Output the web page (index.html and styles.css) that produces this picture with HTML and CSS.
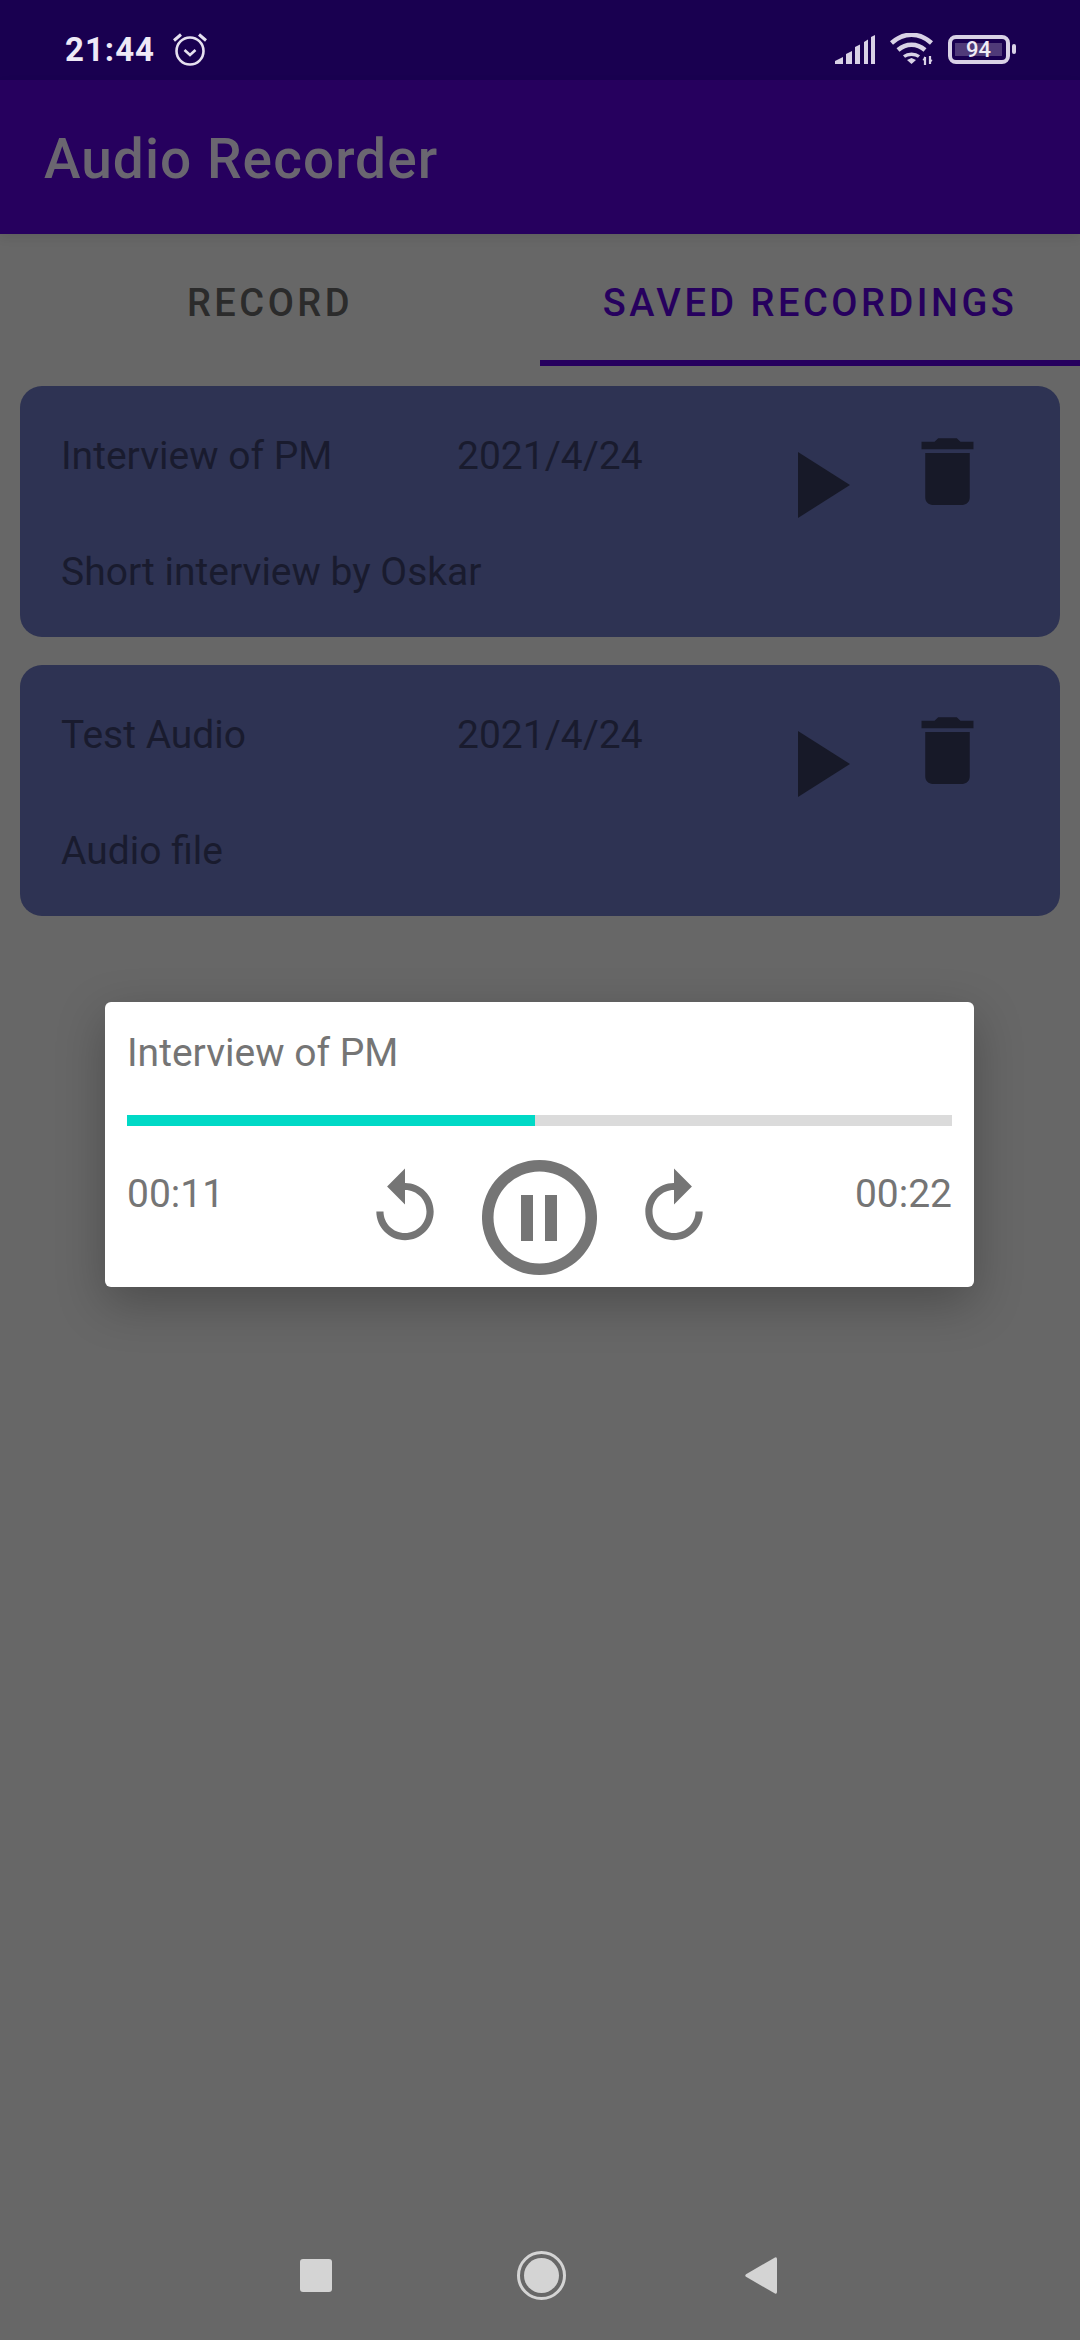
FILE: index.html
```html
<!DOCTYPE html>
<html lang="en">
<head>
<meta charset="UTF-8">
<title>Audio Recorder</title>
<link rel="stylesheet" href="styles.css">
</head>
<body>
<div class="status-bar">
	<span class="clock">21:44</span>
	<svg class="alarm" width="34" height="34" viewBox="0 0 34 34" fill="none" stroke="#e6e0f0">
		<circle cx="17" cy="19" r="13.500" stroke-width="2.600"/>
		<path d="M11.500 18l5.500 5 5.500-5" stroke-width="2.600"/>
		<path d="M1 8.500l7-6M33 8.500l-7-6" stroke-width="3"/>
	</svg>
	<div class="status-right">
		<svg class="signal" width="40" height="29" viewBox="0 0 40 29" fill="#d9d2e6">
			<path d="M0 29v-3l8-4v7zM11 29V19l6-3v13zM20 29V12l5-2.500V29zM29 29V7l4-2.500V29zM36 29V2l4-2v29z"/>
		</svg>
		<svg class="wifi" width="43" height="32" viewBox="0 0 43 32" fill="none" stroke="#d9d2e6" stroke-width="4.500">
			<path d="M1.500 10c12-11 28-11 40 0"/>
			<path d="M8 17c8-7 19-7 27 0"/>
			<path d="M14 23.500c4-3 11-3 15 0" stroke-width="3.400"/>
			<path d="M17 27l4.500-2 4.500 2-4.500 4z" fill="#d9d2e6" stroke="none"/>
			<path d="M35 24v8M40 23v8" stroke-width="2.200"/>
			<path d="M32.500 27l2.500-4v5zM42.500 27l-2.500 4v-5z" fill="#d9d2e6" stroke="none"/>
		</svg>
		<div class="battery">
			<div class="battery-body"><span class="battery-level">94</span></div>
			<div class="battery-nub"></div>
		</div>
	</div>
</div>

<div class="app-bar">Audio Recorder</div>

<div class="tabs">
	<div class="tab">RECORD</div>
	<div class="tab active">SAVED RECORDINGS</div>
</div>

<div class="content">
	<div class="card">
		<div class="card-text">
			<div class="card-top">
				<span class="card-name">Interview of PM</span>
				<span>2021/4/24</span>
			</div>
			<div class="card-desc">Short interview by Oskar</div>
		</div>
		<svg class="play" width="52" height="66" viewBox="0 0 52 66"><polygon points="0,0 52,33 0,66"/></svg>
		<svg class="trash" width="89" height="89" viewBox="0 0 24 24"><path d="M6 19c0 1.100.9 2 2 2h8c1.100 0 2-.9 2-2V7H6v12zM19 4h-3.500l-1-1h-5l-1 1H5v2h14V4z"/></svg>
	</div>
	<div class="card">
		<div class="card-text">
			<div class="card-top">
				<span class="card-name">Test Audio</span>
				<span>2021/4/24</span>
			</div>
			<div class="card-desc">Audio file</div>
		</div>
		<svg class="play" width="52" height="66" viewBox="0 0 52 66"><polygon points="0,0 52,33 0,66"/></svg>
		<svg class="trash" width="89" height="89" viewBox="0 0 24 24"><path d="M6 19c0 1.100.9 2 2 2h8c1.100 0 2-.9 2-2V7H6v12zM19 4h-3.500l-1-1h-5l-1 1H5v2h14V4z"/></svg>
	</div>
</div>

<div class="nav-bar">
	<div class="nav-square"></div>
	<div class="nav-home"><div class="nav-home-dot"></div></div>
	<svg class="nav-back" width="32" height="37" viewBox="0 0 32 37"><path d="M30 .5L1 17.200q-1.500 1.300 0 2.600L30 36.500q2 .7 2-1.500V2q0-2.200-2-1.500z"/></svg>
</div>

<div class="player">
	<div class="player-title">Interview of PM</div>
	<div class="progress"><div class="progress-fill" style="width: 49.400%"></div></div>
	<div class="player-row">
		<span class="time">00:11</span>
		<div class="controls">
			<svg width="86" height="86" viewBox="0 0 24 24"><path d="M12 5V1L7 6l5 5V7c3.310 0 6 2.690 6 6s-2.690 6-6 6-6-2.690-6-6H4c0 4.420 3.580 8 8 8s8-3.580 8-8-3.580-8-8-8z"/></svg>
			<svg width="115" height="115" viewBox="0 0 115 115"><path fill-rule="evenodd" d="M57.500 0a57.500 57.500 0 1 0 0 115a57.500 57.500 0 1 0 0-115zM57.500 11.500a46 46 0 1 1 0 92a46 46 0 1 1 0-92z"/><path d="M39 35h12v46H39zM63 35h12v46H63z"/></svg>
			<svg width="86" height="86" viewBox="0 0 24 24"><path d="M12 5V1l5 5-5 5V7c-3.310 0-6 2.690-6 6s2.690 6 6 6 6-2.690 6-6h2c0 4.420-3.580 8-8 8s-8-3.580-8-8 3.580-8 8-8z"/></svg>
		</div>
		<span class="time time-end">00:22</span>
	</div>
</div>
</body>
</html>
```

FILE: styles.css
```css
*{
	box-sizing: border-box;
}
html,body{
	margin: 0;
	padding: 0;
}
body{
	width: 1080px;
	height: 2340px;
	position: relative;
	overflow: hidden;
	display: flex;
	flex-direction: column;
	background: #676767;
	font-family: Roboto, "Liberation Sans", sans-serif;
}

.status-bar{
	height: 80px;
	flex: none;
	display: flex;
	align-items: center;
	padding: 18px 64px 0 65px;
	background: #190050;
	color: #eee9f6;
}
.clock{
	font-size: 33px;
	font-weight: 700;
	letter-spacing: 1px;
}
.alarm{
	margin-left: 18px;
}
.status-right{
	margin-left: auto;
	display: flex;
	align-items: center;
	gap: 15px;
}
.battery{
	display: flex;
	align-items: center;
	gap: 2px;
}
.battery-body{
	width: 62px;
	height: 29px;
	padding: 4px 4px 4px 3px;
	border: 4px solid #d9d2e6;
	border-radius: 8px;
	display: flex;
}
.battery-level{
	flex: 1;
	background: #4f3a78;
	color: #f0ecf6;
	font-size: 22px;
	font-weight: 500;
	line-height: 13px;
	text-align: center;
}
.battery-nub{
	width: 4px;
	height: 10px;
	background: #d9d2e6;
	border-radius: 2px;
}

.app-bar{
	height: 154px;
	flex: none;
	display: flex;
	align-items: center;
	padding: 4px 0 0 44px;
	background: #26005e;
	color: #6a6670;
	font-size: 55px;
	font-weight: 500;
	letter-spacing: 1.050px;
	position: relative;
	box-shadow: 0 4px 10px rgba(0,0,0,.08);
}

.tabs{
	height: 132px;
	flex: none;
	display: flex;
}
.tab{
	flex: 1;
	display: flex;
	align-items: center;
	justify-content: center;
	padding-top: 6px;
	color: #2b2b2b;
	font-size: 38px;
	font-weight: 500;
	letter-spacing: 3.500px;
}
.tab.active{
	padding-top: 12px;
	color: #26005e;
	border-bottom: 6px solid #26005e;
}

.content{
	flex: 1;
	display: flex;
	flex-direction: column;
	gap: 28px;
	padding: 20px 20px 0;
}
.card{
	height: 251px;
	display: flex;
	align-items: flex-start;
	padding-left: 41px;
	background: #2e3353;
	border-radius: 22px;
}
.card svg{
	flex: none;
	fill: #171928;
}
.card-text{
	width: 737px;
	padding-top: 45px;
	color: #191b2e;
	font-size: 39px;
	line-height: 50px;
}
.card-top{
	display: flex;
}
.card-name{
	width: 396px;
}
.card-desc{
	margin-top: 66px;
}
.play{
	margin-top: 66px;
}
.trash{
	margin: 41px 0 0 53px;
}

.nav-bar{
	height: 140px;
	flex: none;
	display: flex;
	align-items: flex-start;
	padding: 51px 0 0 300px;
}
.nav-square{
	width: 32px;
	height: 33px;
	margin-top: 8px;
	background: #d4d4d4;
	border-radius: 3px;
}
.nav-home{
	width: 49px;
	height: 49px;
	margin-left: 185px;
	padding: 4px;
	border: 3px solid #d4d4d4;
	border-radius: 50%;
}
.nav-home-dot{
	width: 100%;
	height: 100%;
	background: #d4d4d4;
	border-radius: 50%;
}
.nav-back{
	margin: 6px 0 0 179px;
	fill: #d4d4d4;
}

.player{
	position: absolute;
	left: 105px;
	top: 1002px;
	width: 869px;
	height: 285px;
	padding: 0 22px;
	background: #fff;
	border-radius: 6px;
	color: #757575;
	box-shadow: 0 16px 48px rgba(0,0,0,.26);
}
.player-title{
	padding-top: 26px;
	font-size: 39px;
	line-height: 50px;
}
.progress{
	height: 11px;
	margin-top: 37px;
	background: #dbdbdb;
}
.progress-fill{
	height: 100%;
	background: #00d9c6;
}
.player-row{
	display: grid;
	grid-template-columns: 1fr auto 1fr;
	align-items: start;
	margin-top: 34px;
	font-size: 39px;
	line-height: 50px;
}
.time{
	margin-top: 9px;
}
.time-end{
	justify-self: end;
}
.controls{
	display: flex;
	align-items: flex-start;
	gap: 34px;
	fill: #757575;
}
.controls svg:first-child,.controls svg:last-child{
	margin-top: 5px;
}
```
